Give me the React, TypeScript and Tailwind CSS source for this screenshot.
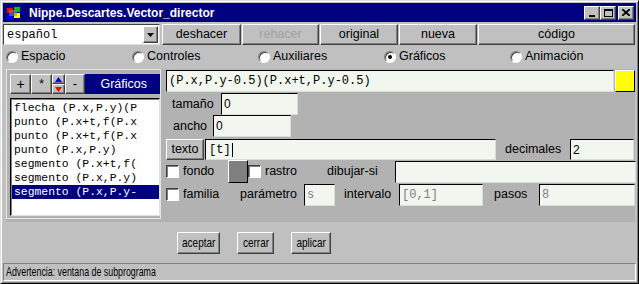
import React from "react";

const ui = { fontFamily: '"Liberation Sans", Arial, sans-serif' };
const mono = { fontFamily: '"Liberation Mono", "Courier New", monospace' };

const raised =
  "border border-t-white border-l-white border-r-[#404040] border-b-[#404040] shadow-[inset_-1px_-1px_#808080] bg-[#c0c0c0]";
const sunken =
  "border border-t-[#404040] border-l-[#404040] border-r-white border-b-white shadow-[inset_1px_1px_#808080]";
const field = "border border-t-black border-l-black border-r-[#dcdcdc] border-b-[#dcdcdc] bg-[#f1f6ef]";

function Radio({ label, checked }: { label: string; checked?: boolean }) {
  return (
    <div className="flex items-center gap-[3px]">
      <span className="w-[12px] h-[12px] rounded-full bg-white border border-t-[#808080] border-l-[#808080] border-r-white border-b-white shadow-[inset_1px_1px_#404040] flex items-center justify-center">
        {checked && <span className="w-[4px] h-[4px] rounded-full bg-black" />}
      </span>
      <span className="text-[12.5px] text-black">{label}</span>
    </div>
  );
}

function Check() {
  return <span className={`w-[13px] h-[13px] bg-white ${sunken}`} />;
}

function Field({ w, value, dim, m }: { w: string; value?: string; dim?: boolean; m?: boolean }) {
  return (
    <div
      className={`${w} h-[22px] ${field} flex items-center pl-[2px] text-[12px] ${dim ? "text-[#808080]" : "text-black"}`}
      style={m ? mono : ui}
    >
      {value}
    </div>
  );
}

// narrow label used by the dialog buttons
function Narrow({ children }: { children: React.ReactNode }) {
  return <span className="inline-block [transform:scaleX(0.77)] whitespace-nowrap">{children}</span>;
}

const items = [
  "flecha (P.x,P.y)(P",
  "punto (P.x+t,f(P.x",
  "punto (P.x+t,f(P.x",
  "punto (P.x,P.y)",
  "segmento (P.x+t,f(",
  "segmento (P.x,P.y)",
  "segmento (P.x,P.y-",
];

export default function App() {
  return (
    <div
      className="w-[639px] h-[284px] bg-[#c0c0c0] border border-t-[#dfdfdf] border-l-[#dfdfdf] border-r-black border-b-black shadow-[inset_1px_1px_white,inset_-1px_-1px_#808080] p-[1px] flex flex-col"
      style={ui}
    >
      {/* title bar */}
      <div className="h-[19px] mx-[1px] mt-[1px] bg-[#000080] flex items-center pl-[3px] pr-[2px]">
        <svg width="16" height="14" viewBox="0 0 16 14">
          <rect x="0" y="0" width="16" height="14" fill="#000080" />
          <rect x="1" y="2" width="6" height="5" fill="#ff0000" />
          <rect x="8" y="1" width="6" height="5" fill="#00c000" />
          <rect x="1" y="8" width="6" height="5" fill="#0000ff" />
          <rect x="8" y="7" width="6" height="5" fill="#ffff00" />
          <rect x="3" y="4" width="8" height="6" fill="#808080" opacity="0.6" />
        </svg>
        <span className="ml-[7px] text-white font-bold text-[12px]">Nippe.Descartes.Vector_director</span>
        <div className="ml-auto flex">
          <div className={`w-[16px] h-[14px] ${raised} flex items-end justify-center pb-[2px]`}>
            <span className="w-[6px] h-[2px] bg-black" />
          </div>
          <div className={`w-[16px] h-[14px] ${raised} flex items-center justify-center`}>
            <span className="w-[9px] h-[8px] border border-black border-t-2" />
          </div>
          <div className={`w-[16px] h-[14px] ${raised} ml-[2px] flex items-center justify-center`}>
            <svg width="8" height="7" viewBox="0 0 8 7">
              <path d="M0 0 L8 7 M8 0 L0 7" stroke="black" strokeWidth="1.8" />
            </svg>
          </div>
        </div>
      </div>

      {/* toolbar */}
      <div className="flex h-[21px] mt-[2px] ml-[1px] gap-[1px]">
        <div className="w-[157px] h-[21px] bg-white border border-t-[#404040] border-l-[#404040] border-r-[#dfdfdf] border-b-[#dfdfdf] flex items-center">
          <span className="text-[12px] pl-[3px] flex-1" style={mono}>español</span>
          <div className={`w-[15px] h-[17px] mr-[1px] ${raised} flex items-center justify-center`}>
            <svg width="7" height="4" viewBox="0 0 7 4"><path d="M0 0 H7 L3.5 4 Z" fill="black" /></svg>
          </div>
        </div>
        <div className={`w-[79px] ml-[1px] ${raised} flex items-center justify-center text-[12.5px]`}>deshacer</div>
        <div className={`w-[77px] ${raised} flex items-center justify-center text-[12.5px] text-[#a0a0a0]`}>rehacer</div>
        <div className={`w-[78px] ${raised} flex items-center justify-center text-[12.5px]`}>original</div>
        <div className={`w-[78px] ${raised} flex items-center justify-center text-[12.5px]`}>nueva</div>
        <div className={`w-[157px] ${raised} flex items-center justify-center text-[12.5px]`}>código</div>
      </div>

      {/* radio row */}
      <div className="grid grid-cols-5 h-[23px] items-center pl-[4px] w-[634px]">
        <Radio label="Espacio" />
        <Radio label="Controles" />
        <Radio label="Auxiliares" />
        <Radio label="Gráficos" checked />
        <Radio label="Animación" />
      </div>

      {/* main panel */}
      <div className="ml-[4px] mt-[1px] w-[629px] h-[153px] bg-[#b2b2b2] flex">
        {/* left list panel */}
        <div className="w-[156px] h-[150px] border border-[#e6e6e6] pl-[3px] pt-[4px] flex flex-col">
          <div className="flex h-[20px] w-[150px]">
            <div className={`w-[21px] ${raised} flex items-center justify-center text-[14px]`}>+</div>
            <div className={`w-[21px] ${raised} flex items-center justify-center text-[12px]`}>*</div>
            <div className="w-[13px] flex flex-col">
              <div className={`h-[10px] ${raised} flex items-center justify-center`}>
                <svg width="7" height="5" viewBox="0 0 7 5"><path d="M3.5 0 L7 5 H0 Z" fill="#0000ff" /></svg>
              </div>
              <div className={`h-[10px] ${raised} flex items-center justify-center`}>
                <svg width="7" height="5" viewBox="0 0 7 5"><path d="M0 0 H7 L3.5 5 Z" fill="#ff0000" /></svg>
              </div>
            </div>
            <div className={`w-[20px] ${raised} flex items-center justify-center text-[13px]`}>-</div>
            <div className="flex-1 bg-[#000080] text-white text-[12.5px] flex items-center justify-end pr-[13px]">Gráficos</div>
          </div>
          <div className="mt-[4px] w-[150px] h-[118px] bg-white border border-t-black border-l-black border-r-[#e0e0e0] border-b-[#e0e0e0] shadow-[inset_1px_1px_#808080] pt-[2px] pl-[1px]">
            {items.map((t, i) => (
              <div
                key={i}
                className={`h-[14px] leading-[14px] text-[11.4px] pl-[2px] whitespace-nowrap overflow-hidden w-[147px] ${
                  i === items.length - 1 ? "bg-[#000080] text-white" : "text-black"
                }`}
                style={mono}
              >
                {t}
              </div>
            ))}
          </div>
        </div>

        {/* right editor panel */}
        <div className="flex-1 pl-[5px] pt-[1px] flex flex-col">
          <div className="flex h-[22px] items-center">
            <Field w="w-[448px]" value="(P.x,P.y-0.5)(P.x+t,P.y-0.5)" m />
            <div className="ml-[1px] w-[20px] h-[22px] bg-[#ffff00] border border-t-white border-l-white border-r-black border-b-black" />
          </div>
          <div className="flex h-[22px] items-center mt-[1px]">
            <span className="text-[12.5px] w-[55px] pl-[6px]">tamaño</span>
            <Field w="w-[77px]" value="0" />
          </div>
          <div className="flex h-[22px] items-center">
            <span className="text-[12.5px] w-[47px] pl-[7px]">ancho</span>
            <Field w="w-[78px]" value="0" />
          </div>
          <div className="flex h-[21px] items-center mt-[2px]">
            <div className={`w-[38px] h-[21px] ${raised} flex items-center justify-center text-[12.5px]`}>texto</div>
            <div className={`ml-[1px] w-[291px] h-[21px] ${field} flex items-center pl-[3px] text-[12px]`} style={mono}>
              [t]<span className="w-[1px] h-[14px] bg-black ml-[1px]" />
            </div>
            <span className="text-[12.5px] ml-[9px] w-[65px]">decimales</span>
            <div className={`w-[64px] h-[21px] ${field} flex items-center pl-[2px] text-[12px]`}>2</div>
          </div>
          <div className="flex h-[23px] items-center">
            <Check />
            <span className="text-[12.5px] ml-[4px] w-[45px]">fondo</span>
            <div className="w-[20px] h-[23px] bg-[#808080] border border-t-white border-l-white border-r-black border-b-black" />
            <Check />
            <span className="text-[12.5px] ml-[4px] w-[62px]">rastro</span>
            <span className="text-[12.5px] w-[68px]">dibujar-si</span>
            <Field w="w-[241px]" />
          </div>
          <div className="flex h-[23px] items-center">
            <Check />
            <span className="text-[12.5px] ml-[4px] w-[57px]">familia</span>
            <span className="text-[12.5px] w-[64px]">parámetro</span>
            <Field w="w-[31px]" value="s" dim m />
            <span className="text-[12.5px] ml-[9px] w-[55px]">intervalo</span>
            <Field w="w-[84px]" value="[0,1]" dim m />
            <span className="text-[12.5px] ml-[11px] w-[45px]">pasos</span>
            <Field w="w-[96px]" value="8" dim m />
          </div>
        </div>
      </div>

      {/* bottom buttons */}
      <div className="flex h-[41px] items-center pl-[175px] gap-[17px]">
        <div className={`w-[43px] h-[22px] ${raised} flex items-center justify-center text-[13px]`}><Narrow>aceptar</Narrow></div>
        <div className={`w-[37px] h-[22px] ${raised} flex items-center justify-center text-[13px]`}><Narrow>cerrar</Narrow></div>
        <div className={`w-[40px] h-[22px] ${raised} flex items-center justify-center text-[13px]`}><Narrow>aplicar</Narrow></div>
      </div>

      {/* status bar */}
      <div className="mx-[1px] h-[18px] border border-t-[#808080] border-l-[#808080] border-r-white border-b-white flex items-center pl-[2px] text-[13px] overflow-hidden">
        <span className="inline-block [transform:scaleX(0.68)] origin-left whitespace-nowrap">Advertencia: ventana de subprograma</span>
      </div>
    </div>
  );
}
